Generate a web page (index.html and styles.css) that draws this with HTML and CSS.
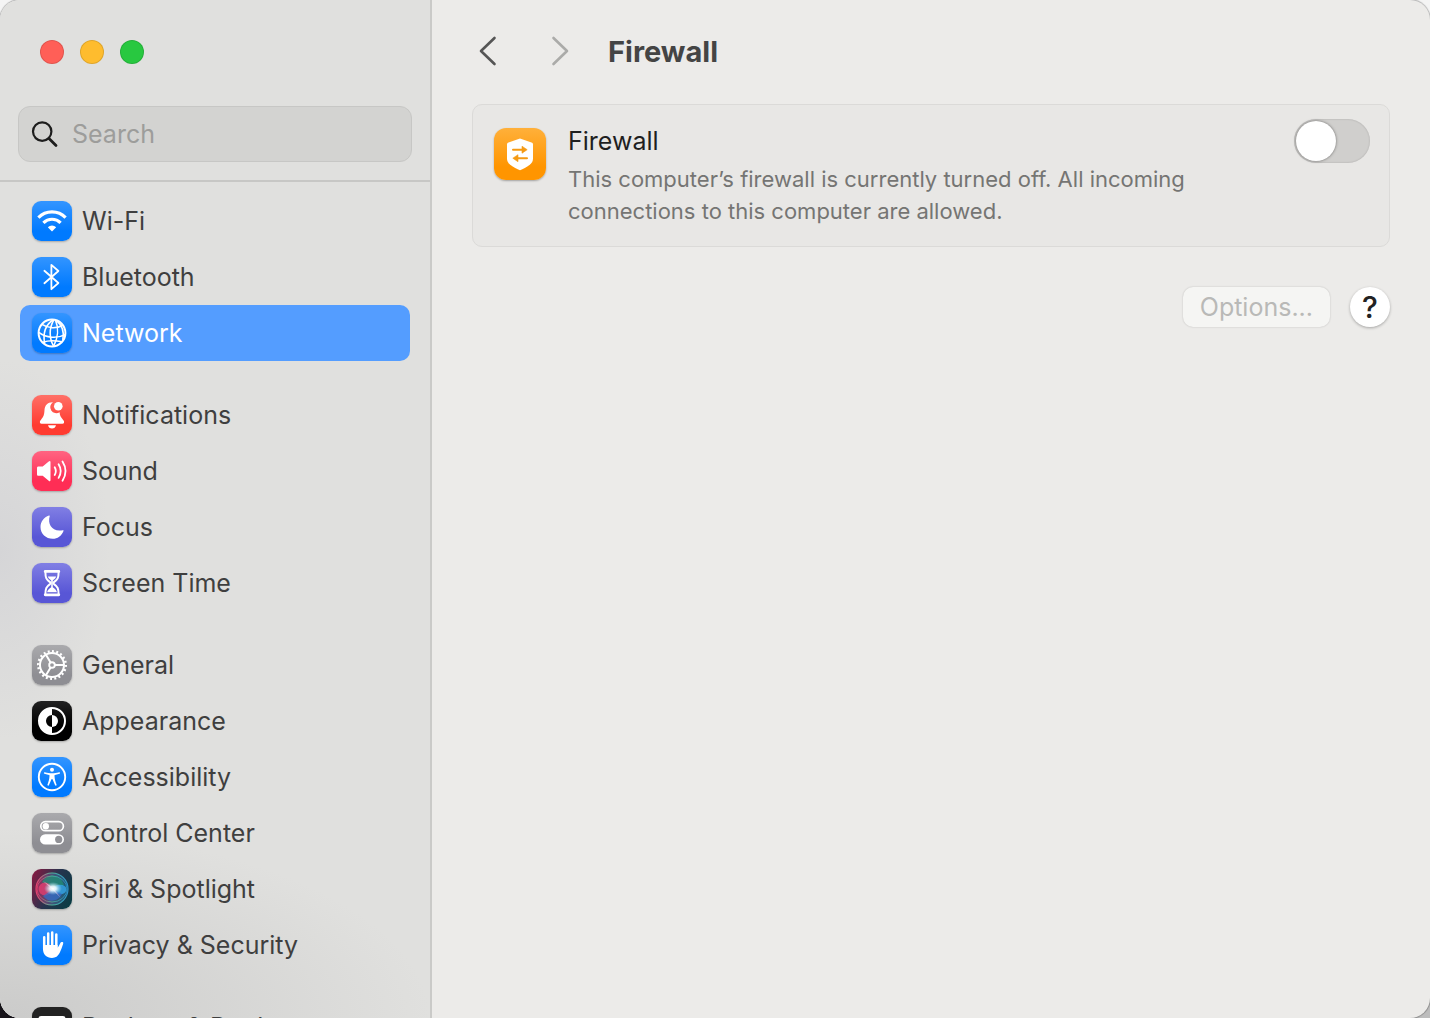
FILE: index.html
```html
<!DOCTYPE html>
<html lang="en">
<head>
    <meta charset="UTF-8">
    <meta name="viewport" content="width=device-width, initial-scale=1.0">
    <title>Firewall</title>
    <link rel="stylesheet" href="styles.css">
</head>
<body>
    <div class="window">
        <aside class="sidebar">
            <div class="sidebar-top">
                <div class="window-controls">
                    <button class="control close" aria-label="Close"></button>
                    <button class="control minimize" aria-label="Minimize"></button>
                    <button class="control maximize" aria-label="Zoom"></button>
                </div>
                <label class="search" for="search">
                    <svg class="search-icon" viewBox="0 0 28 28" fill="none" stroke="#1d1d1d" stroke-width="2.2" stroke-linecap="round" aria-hidden="true">
                        <circle cx="11.2" cy="11.6" r="9.2"/>
                        <path d="M18 18.5l7 7" stroke-width="2.8"/>
                    </svg>
                    <input type="search" id="search" placeholder="Search" aria-label="Search">
                </label>
            </div>

            <nav class="menu">
                <div class="group">
                    <a href="#wifi" class="item">
                        <svg class="icon blue" viewBox="0 0 40 40" fill="none" stroke="#fff" stroke-width="3.2" aria-hidden="true">
                            <path d="M6.4 16.6a19 19 0 0 1 27.2 0"/>
                            <path d="M11.4 21.8a12.2 12.2 0 0 1 17.2 0"/>
                            <path d="M15.8 26.2a6.2 6.2 0 0 1 8.4 0L20 30.4z" fill="#fff" stroke="none"/>
                        </svg>
                        <span>Wi-Fi</span>
                    </a>
                    <a href="#bluetooth" class="item">
                        <svg class="icon blue" viewBox="0 0 40 40" fill="none" stroke="#fff" stroke-width="1.8" stroke-linejoin="round" stroke-linecap="round" aria-hidden="true">
                            <path d="M12.4 13.8L26.4 26l-7 6.2V7.8l7 6.2-14 12.2"/>
                        </svg>
                        <span>Bluetooth</span>
                    </a>
                    <a href="#network" class="item active" aria-current="page">
                        <svg class="icon blue" viewBox="0 0 40 40" fill="none" stroke="#fff" stroke-width="1.6" aria-hidden="true">
                            <circle cx="20" cy="20" r="13.4" stroke-width="2"/>
                            <path d="M21.4 6.8C14.6 11 10.6 19 12.6 30.6"/>
                            <path d="M21.8 6.8C17 15 17 25 21.6 33.2"/>
                            <path d="M23.6 7.4C26.8 15 26 25 21.6 33.2"/>
                            <path d="M24.4 7.6c5.8 4.6 8 11.8 6.4 19.4"/>
                            <path d="M10 11.4c6 4 14.6 4.6 20.6.8"/>
                            <path d="M6.8 19.4c7.4 5.6 18.4 6.4 26.2 2.2"/>
                            <path d="M10.6 29.2c5.6-1.8 13-1.8 19.2-.4"/>
                        </svg>
                        <span>Network</span>
                    </a>
                </div>

                <div class="group">
                    <a href="#notifications" class="item">
                        <svg class="icon red" viewBox="0 0 40 40" fill="#fff" aria-hidden="true">
                            <path d="M20.9 7.2C15.6 7 12.8 10.4 12.5 15c-.3 5.6-1.3 7-3.3 9.4-1.3 1.500-1.500 2.200-1.200 3.400.2.7.7 1 1.500 1h21c.8 0 1.300-.3 1.500-1 .3-1.200.1-1.900-1.200-3.400-2-2.400-3-4-3.200-7.200a5.800 5.800 0 0 1-6.700-10z"/>
                            <circle cx="26.3" cy="11.2" r="4.3"/>
                            <path d="M16 30.3h8c-.4 2-2 3.300-4 3.300s-3.600-1.300-4-3.300z"/>
                        </svg>
                        <span>Notifications</span>
                    </a>
                    <a href="#sound" class="item">
                        <svg class="icon pink" viewBox="0 0 40 40" fill="none" stroke="#fff" stroke-width="1.8" stroke-linecap="round" aria-hidden="true">
                            <path d="M6.5 15.5h4.2l6-5c1.100-.9 1.800-.6 1.800.7v17.900c0 1.300-.7 1.600-1.800.7l-6-5H6.500c-1 0-1.500-.5-1.500-1.500V17c0-1 .5-1.500 1.500-1.500z" fill="#fff" stroke="none"/>
                            <path d="M22.7 16.2c1.400 2.400 1.400 5.400 0 7.800"/>
                            <path d="M26.6 13.3c2.600 4.200 2.600 9.400 0 13.600"/>
                            <path d="M30.5 10.5c3.800 6 3.800 13.200 0 19.200"/>
                        </svg>
                        <span>Sound</span>
                    </a>
                    <a href="#focus" class="item">
                        <svg class="icon purple" viewBox="0 0 40 40" fill="#fff" aria-hidden="true">
                            <path d="M17 8.5c.5-.2.9.1.7.7C15.3 17 20 25.2 30.7 23.2c.7-.1 1.100.2.8.8C29.500 29 25.500 31.800 20.700 31.800 13.900 31.800 8.500 26.800 8.500 20c0-5.200 3.300-9.600 8.500-11.500z"/>
                        </svg>
                        <span>Focus</span>
                    </a>
                    <a href="#screen-time" class="item">
                        <svg class="icon purple" viewBox="0 0 40 40" fill="none" stroke="#fff" stroke-width="2" stroke-linejoin="round" stroke-linecap="round" aria-hidden="true">
                            <path d="M13.2 8.4h13.6M13.2 31.8h13.6" stroke-width="2.8"/>
                            <path d="M13.400 9c0 6 1 7.500 4.600 10.100.7.6.7 1.400 0 2-3.600 2.600-4.600 4.400-4.600 10.200M26.600 9c0 6-1 7.500-4.600 10.100-.7.6-.7 1.400 0 2 3.600 2.600 4.600 4.400 4.600 10.200"/>
                            <path d="M15.800 13.600h8.400c-.6 1.800-2 2.800-3.400 4v6.600c1.800 1.200 3.400 2.600 4.200 5H15c.8-2.400 2.400-3.800 4.200-5v-6.600c-1.400-1.200-2.800-2.200-3.400-4z" fill="#fff" stroke="none"/>
                        </svg>
                        <span>Screen Time</span>
                    </a>
                </div>

                <div class="group">
                    <a href="#general" class="item">
                        <svg class="icon gray" viewBox="0 0 40 40" fill="none" stroke="#fff" aria-hidden="true">
                            <circle cx="20" cy="20" r="12" stroke-width="2"/>
                            <circle cx="20" cy="20" r="13.8" stroke-width="2.4" pathLength="40" stroke-dasharray="0.9 1.1"/>
                            <circle cx="20" cy="20" r="2.8" stroke-width="1.9"/>
                            <path d="M22.7 20h9.500M18.600 17.600l-4.800-8.200M18.600 22.400l-4.800 8.200" stroke-width="2"/>
                        </svg>
                        <span>General</span>
                    </a>
                    <a href="#appearance" class="item">
                        <svg class="icon black" viewBox="0 0 40 40" aria-hidden="true">
                            <circle cx="20" cy="20" r="13" fill="none" stroke="#fff" stroke-width="2"/>
                            <path d="M20 7a13 13 0 0 0 0 26v-7a6 6 0 0 1 0-12z" fill="#fff"/>
                            <path d="M20 14a6 6 0 0 1 0 12z" fill="#fff"/>
                        </svg>
                        <span>Appearance</span>
                    </a>
                    <a href="#accessibility" class="item">
                        <svg class="icon blue" viewBox="0 0 40 40" fill="#fff" aria-hidden="true">
                            <circle cx="20" cy="20" r="13.2" fill="none" stroke="#fff" stroke-width="1.9"/>
                            <circle cx="20" cy="12.8" r="2"/>
                            <path d="M12.800 15.200c2.800.7 4.800 1 7.200 1s4.400-.3 7.200-1c1-.2 1.300 1.200.3 1.500l-4.500 1.200c-.5.2-.6.4-.5 1 .2 3.200.8 5.300 2 8.600.4 1.200-1 1.700-1.500.6L20.400 22h-.8L17 28.100c-.5 1.100-1.900.6-1.500-.6 1.200-3.300 1.800-5.400 2-8.600.1-.6 0-.8-.5-1l-4.500-1.200c-1-.3-.7-1.700.3-1.500z"/>
                        </svg>
                        <span>Accessibility</span>
                    </a>
                    <a href="#control-center" class="item">
                        <svg class="icon gray" viewBox="0 0 40 40" fill="#fff" aria-hidden="true">
                            <rect x="8.8" y="8.7" width="22.6" height="9" rx="4.5" fill="none" stroke="#fff" stroke-width="1.7"/>
                            <circle cx="13.8" cy="13.2" r="3.2"/>
                            <path d="M13.2 21.2h13.600a5.200 5.200 0 0 1 0 10.400H13.200a5.200 5.200 0 0 1 0-10.400z"/>
                            <circle cx="26.7" cy="26.4" r="3.6" fill="#919196"/>
                        </svg>
                        <span>Control Center</span>
                    </a>
                    <a href="#siri" class="item">
                        <svg class="icon siri" viewBox="0 0 40 40" fill="none" aria-hidden="true">
                            <defs>
                                <radialGradient id="siriGlow">
                                    <stop offset="0" stop-color="#fff"/>
                                    <stop offset="0.35" stop-color="#eefcff" stop-opacity="0.9"/>
                                    <stop offset="1" stop-color="#9fdcf0" stop-opacity="0"/>
                                </radialGradient>
                                <linearGradient id="siriRing" x1="0" x2="1">
                                    <stop offset="0" stop-color="#e5406f"/>
                                    <stop offset="0.5" stop-color="#4cb59b"/>
                                    <stop offset="1" stop-color="#2f91c9"/>
                                </linearGradient>
                                <linearGradient id="siriBall" x1="0" x2="1">
                                    <stop offset="0" stop-color="#b22a5c"/>
                                    <stop offset="0.5" stop-color="#4f5f8c"/>
                                    <stop offset="1" stop-color="#1b6b8a"/>
                                </linearGradient>
                            </defs>
                            <circle cx="20" cy="20" r="16" fill="url(#siriBall)" fill-opacity="0.7"/>
                            <path d="M10 13C15 4 28 4 32 16c-6 4-14 3-22-3z" fill="#218f75" fill-opacity="0.75"/>
                            <circle cx="13" cy="20" r="6.5" fill="#eb3d72" fill-opacity="0.75"/>
                            <ellipse cx="28" cy="20.5" rx="6.5" ry="4.8" fill="#35a5e8" fill-opacity="0.8"/>
                            <path d="M11 27c5 7 15 6 19-2l-9-5z" fill="#346dca" fill-opacity="0.7"/>
                            <circle cx="20" cy="20" r="16" stroke="url(#siriRing)" stroke-width="1.2"/>
                            <ellipse cx="20" cy="20" rx="15" ry="13" stroke="url(#siriRing)" stroke-width="0.8"/>
                            <path d="M11 12l9 6 9 11-8-8z" fill="#f5b5d2" fill-opacity="0.8"/>
                            <ellipse cx="21" cy="19.5" rx="9" ry="6.5" fill="url(#siriGlow)"/>
                        </svg>
                        <span>Siri &amp; Spotlight</span>
                    </a>
                    <a href="#privacy" class="item">
                        <svg class="icon blue" viewBox="0 0 40 40" fill="none" stroke="#fff" stroke-linecap="round" stroke-linejoin="round" aria-hidden="true">
                            <path d="M12.2 12.2V24M16.2 8.6V22M20.2 7.4V22M24.3 9.4V22" stroke-width="2.5"/>
                            <path d="M11 20h14.600v2.800c1-1.200 1.800-2.800 2.500-4.300.6-1.300 1.700-1.700 2.500-1.400.7.3.8 1.100.5 2-1 3-2 6-3.500 9C26 31.300 23.600 33 20 33c-5.500 0-9-3.500-9-9z" fill="#fff" stroke="none"/>
                        </svg>
                        <span>Privacy &amp; Security</span>
                    </a>
                </div>

                <div class="group">
                    <a href="#desktop" class="item">
                        <svg class="icon dark" viewBox="0 0 40 40" aria-hidden="true">
                            <rect x="6.5" y="9" width="27" height="21" rx="2.5" fill="#fff"/>
                            <rect x="10" y="24" width="20" height="3.5" rx="1" fill="#222"/>
                        </svg>
                        <span>Desktop &amp; Dock</span>
                    </a>
                </div>
            </nav>
        </aside>

        <main class="content">
            <header class="toolbar">
                <button class="arrow" aria-label="Back">
                    <svg viewBox="0 0 20 32" aria-hidden="true"><path d="M16.500 3L3 16l13.500 13"/></svg>
                </button>
                <button class="arrow" aria-label="Forward" disabled>
                    <svg viewBox="0 0 20 32" aria-hidden="true"><path d="M3.500 3L17 16 3.500 29"/></svg>
                </button>
                <h1>Firewall</h1>
            </header>

            <section class="card">
                <svg class="firewall-icon" viewBox="0 0 52 52" aria-hidden="true">
                    <path d="M26 10.400l11.500 4.100c1 .4 1.500 1 1.500 2v13.700c0 2.800-1 4.700-3.200 6.500C32.500 39.200 29 41 26 42.200c-3-1.200-6.500-3-9.800-5.500-2.200-1.800-3.200-3.700-3.200-6.500V16.500c0-1 .5-1.600 1.500-2z" fill="#fff"/>
                    <path d="M19 21.700h9.500M33 30.200h-9.500" stroke="#f59a13" stroke-width="2" stroke-linecap="round"/>
                    <path d="M28 18.200l5.200 3.500-5.200 3.500zM24 26.700l-5.200 3.500 5.200 3.500z" fill="#f59a13" stroke="#f59a13" stroke-width="0.6" stroke-linejoin="round"/>
                </svg>
                <div class="card-text">
                    <label for="firewall">Firewall</label>
                    <p>This computer’s firewall is currently turned off. All incoming connections to this computer are allowed.</p>
                </div>
                <input type="checkbox" role="switch" id="firewall" class="switch">
            </section>

            <div class="actions">
                <button class="options" disabled>Options...</button>
                <button class="help" aria-label="Help">?</button>
            </div>
        </main>
    </div>
</body>
</html>
```
FILE: styles.css
```css
* {
    box-sizing: border-box;
}

body {
    margin: 0;
    font-family: 'Inter', sans-serif;
    font-size: 25px;
    color: #444;
    background: linear-gradient(to bottom, #f4f4f4 50%, transparent 50%), linear-gradient(to right, #17141a 50%, #bdbdbd 50%);
}

button {
    padding: 0;
    border: none;
    background: none;
    font-family: inherit;
    cursor: pointer;
}

.window {
    display: flex;
    height: 100vh;
    overflow: hidden;
    border-radius: 20px;
    background: #ecebe9;
    box-shadow: 0 0 1px 1px rgba(0, 0, 0, 0.25);
}

/* Sidebar */
.sidebar {
    display: flex;
    flex-direction: column;
    flex: 0 0 432px;
    border-right: 2px solid #cacac8;
    background:
        radial-gradient(ellipse 110px 190px at 0 550px, #d5d5d7, rgba(213, 213, 215, 0)),
        radial-gradient(ellipse 430px 190px at 0 100%, #cbcbca, rgba(214, 214, 214, 0)),
        #e0e0de;
}

.sidebar-top {
    padding: 40px 18px 18px;
    border-bottom: 2px solid #c7c7c5;
}

.window-controls {
    display: flex;
    gap: 16px;
    padding-left: 22px;
    margin-bottom: 42px;
}

.control {
    width: 24px;
    height: 24px;
    border: 1px solid rgba(0, 0, 0, 0.12);
    border-radius: 50%;
}

.close {
    background: #ff5f57;
}

.minimize {
    background: #febc2e;
}

.maximize {
    background: #28c840;
}

.search {
    display: flex;
    align-items: center;
    gap: 13px;
    height: 56px;
    padding: 0 12px;
    border: 1px solid #c7c7c5;
    border-radius: 12px;
    background: #d3d3d1;
}

.search-icon {
    flex: none;
    width: 28px;
    height: 28px;
}

.search input {
    width: 100%;
    padding: 0;
    border: none;
    outline: none;
    background: none;
    font: inherit;
    color: #1d1d1d;
}

.search input::placeholder {
    color: #9d9d9b;
    opacity: 1;
}

.menu {
    display: flex;
    flex-direction: column;
    flex: 1;
    gap: 26px;
    min-height: 0;
    padding: 11px 20px 0;
    overflow: hidden;
}

.item {
    display: flex;
    align-items: center;
    gap: 10px;
    height: 56px;
    padding: 0 12px;
    border-radius: 10px;
    color: #3f3f3f;
    text-decoration: none;
}

.active {
    background: #549dff;
    color: white;
}

.icon {
    flex: none;
    width: 40px;
    height: 40px;
    border-radius: 9px;
    box-shadow: 0 1px 2px rgba(0, 0, 0, 0.25);
}

.blue {
    background: linear-gradient(#3395ff, #007aff 75%);
}

.red {
    background: linear-gradient(#ff7067, #ff3b30 75%);
}

.pink {
    background: linear-gradient(#ff6482, #ff2d55 75%);
}

.purple {
    background: linear-gradient(#817fe4, #5856d6 75%);
}

.gray {
    background: linear-gradient(#aaaaad, #8e8e93 75%);
}

.black {
    background: linear-gradient(#222, #000 60%);
}

.dark {
    background: #222;
}

.siri {
    background: linear-gradient(115deg, #8d1740, #26344e 50%, #063d42);
}

/* Main pane */
.content {
    flex: 1;
    min-width: 0;
    padding: 0 40px;
}

.toolbar {
    display: flex;
    align-items: center;
    gap: 40px;
    height: 104px;
    padding-bottom: 2px;
}

.arrow {
    width: 32px;
    height: 32px;
}

.arrow svg {
    display: block;
    width: 20px;
    height: 32px;
    margin: auto;
    fill: none;
    stroke: #555;
    stroke-width: 2.6;
    stroke-linecap: round;
    stroke-linejoin: round;
}

.arrow:disabled svg {
    stroke: #ababa9;
}

h1 {
    margin: 0 0 0 -8px;
    font-size: 29px;
    font-weight: 650;
}

.card {
    display: flex;
    align-items: flex-start;
    padding: 14px 19px 19px 21px;
    border: 1px solid #dbdad8;
    border-radius: 10px;
    background: #e8e7e5;
}

.firewall-icon {
    flex: none;
    width: 52px;
    height: 52px;
    margin: 9px 22px 0 0;
    border-radius: 12px;
    background: linear-gradient(#ffb03a, #ff9500 75%);
    box-shadow: 0 1px 2px rgba(0, 0, 0, 0.3);
}

.card-text {
    flex: 1;
}

.card-text label {
    display: block;
    line-height: 44px;
    color: #1f1f1f;
}

.card-text p {
    max-width: 660px;
    margin: 0;
    font-size: 22px;
    line-height: 32px;
    color: #757573;
}

.switch {
    appearance: none;
    flex: none;
    width: 76px;
    height: 44px;
    margin: 0;
    padding: 2px;
    border-radius: 22px;
    background: #d0cfcd;
    box-shadow: inset 0 0 2px rgba(0, 0, 0, 0.2);
    cursor: pointer;
}

.switch::before {
    content: "";
    display: block;
    width: 40px;
    height: 40px;
    border-radius: 50%;
    background: white;
    box-shadow: 0 0 3px rgba(0, 0, 0, 0.5);
}

.switch:checked {
    background: #007aff;
}

.switch:checked::before {
    margin-left: 32px;
}

.actions {
    display: flex;
    justify-content: flex-end;
    gap: 20px;
    margin-top: 40px;
}

.options {
    height: 40px;
    padding: 0 17px;
    border-radius: 10px;
    background: #f5f5f3;
    box-shadow: 0 0 2px rgba(0, 0, 0, 0.2);
    font-size: 25px;
    color: #b9b9b7;
}

.help {
    width: 40px;
    height: 40px;
    border-radius: 50%;
    background: white;
    box-shadow: 0 1px 3px rgba(0, 0, 0, 0.3);
    font-size: 30px;
    font-weight: 500;
    line-height: 40px;
    color: #222;
}
```
